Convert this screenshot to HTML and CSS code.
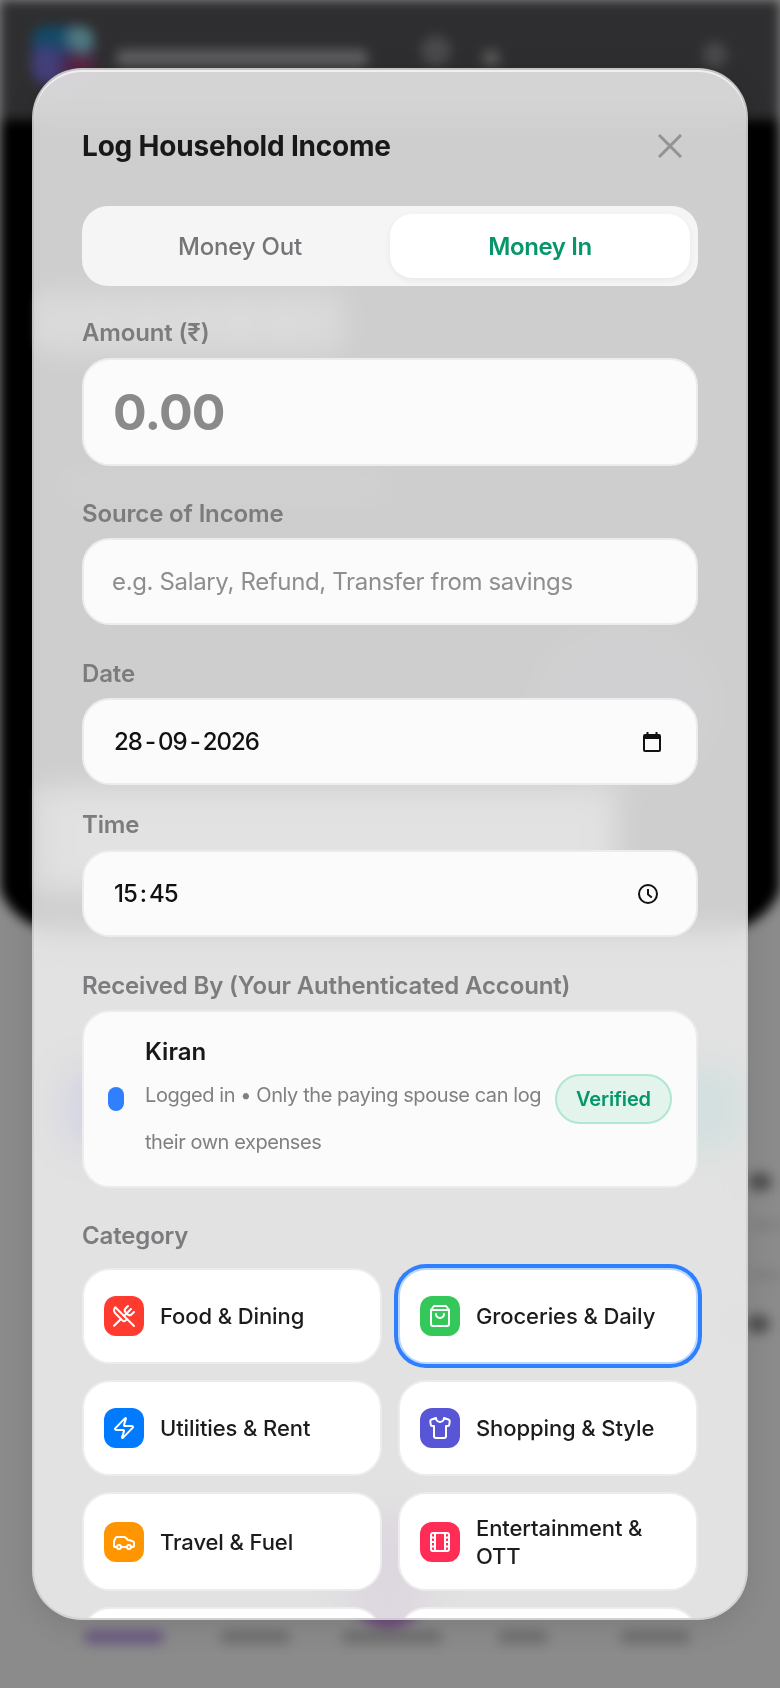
FILE: index.html
```html
<!DOCTYPE html>
<html lang="en">
<head>
    <meta charset="UTF-8">
    <meta name="viewport" content="width=device-width, initial-scale=1.0">
    <title>Log Household Income</title>
    <link rel="stylesheet" href="styles.css">
</head>
<body>

<!-- app page behind the sheet, only seen blurred -->
<div class="backdrop" aria-hidden="true">
    <div class="bd-hero"></div>
    <div class="bd-header"></div>
    <div class="bd-logo"></div>
    <div class="bd-brand"></div>
    <div class="bd-dot bd-dot-a"></div>
    <div class="bd-dot bd-dot-b"></div>
    <div class="bd-dot bd-dot-c"></div>
    <div class="bd-amount"></div>
    <div class="bd-line"></div>
    <div class="bd-circle"></div>
    <div class="bd-quick"></div>
    <div class="bd-blob bd-blob-purple"></div>
    <div class="bd-blob bd-blob-teal"></div>
    <div class="bd-blob bd-blob-lilac"></div>
    <div class="bd-spot bd-spot-a"></div>
    <div class="bd-spot bd-spot-b"></div>
    <div class="bd-row bd-row-a"></div>
    <div class="bd-row bd-row-b"></div>
    <div class="bd-nav bd-nav-a"></div>
    <div class="bd-nav bd-nav-b"></div>
    <div class="bd-nav bd-nav-c"></div>
    <div class="bd-nav bd-nav-d"></div>
    <div class="bd-nav bd-nav-e"></div>
</div>

<div class="overlay">
    <div class="sheet">
        <div class="sheet-header">
            <h1>Log Household Income</h1>
            <svg class="close-icon" viewBox="0 0 24 24" fill="none" stroke="currentColor" stroke-width="3"><path d="M1 1l22 22M23 1L1 23"/></svg>
        </div>

        <div class="segment">
            <div class="segment-tab">Money Out</div>
            <div class="segment-tab active">Money In</div>
        </div>

        <div class="group group-amount">
            <label>Amount (₹)</label>
            <input class="field field-amount" type="text" placeholder="0.00">
        </div>

        <div class="group group-source">
            <label>Source of Income</label>
            <input class="field" type="text" placeholder="e.g. Salary, Refund, Transfer from savings">
        </div>

        <div class="group group-date">
            <label>Date</label>
            <div class="field field-value">
                <span class="value-date">28<i>-</i>09<i>-</i>2026</span>
                <svg class="picker-icon" viewBox="0 0 20 20" fill="none"><path d="M5.5 0v3M14.5 0v3" stroke="#111" stroke-width="2"/><rect x="2" y="3" width="16" height="16" rx="1" stroke="#111" stroke-width="2"/><rect x="2" y="3" width="16" height="4" fill="#111"/></svg>
            </div>
        </div>

        <div class="group group-time">
            <label>Time</label>
            <div class="field field-value">
                <span class="value-date">15<i>:</i>45</span>
                <svg class="picker-icon picker-clock" viewBox="0 0 20 20" fill="none" stroke="#111" stroke-width="2"><circle cx="10" cy="10" r="9"/><path d="M10 5v5.4l3.8 3.2"/></svg>
            </div>
        </div>

        <div class="group group-received">
            <label>Received By (Your Authenticated Account)</label>
            <div class="account-card">
                <span class="account-dot"></span>
                <div class="account-info">
                    <div class="account-name">Kiran</div>
                    <div class="account-note">Logged in • Only the paying spouse can log their own expenses</div>
                </div>
                <span class="badge-verified">Verified</span>
            </div>
        </div>

        <div class="group group-category">
            <label>Category</label>
            <div class="category-grid">
                <div class="category-card">
                    <span class="cat-icon cat-red"><svg viewBox="0 0 24 24"><path d="m16 2-2.3 2.3a3 3 0 0 0 0 4.2l1.8 1.8a3 3 0 0 0 4.2 0L22 8"/><path d="M15 15 3.3 3.3a4.2 4.2 0 0 0 0 6l7.3 7.3c.7.7 2 .7 2.8 0L15 15Zm0 0 7 7"/><path d="m2.1 21.8 6.4-6.3"/><path d="m19 5-7 7"/></svg></span>
                    <span>Food &amp; Dining</span>
                </div>
                <div class="category-card selected">
                    <span class="cat-icon cat-green"><svg viewBox="0 0 24 24"><path d="M6 2 3 6v14a2 2 0 0 0 2 2h14a2 2 0 0 0 2-2V6l-3-4Z"/><path d="M3 6h18"/><path d="M16 10a4 4 0 0 1-8 0"/></svg></span>
                    <span>Groceries &amp; Daily</span>
                </div>
                <div class="category-card">
                    <span class="cat-icon cat-blue"><svg viewBox="0 0 24 24"><path d="M4 14a1 1 0 0 1-.78-1.63l9.9-10.2a.5.5 0 0 1 .86.46l-1.92 6.02A1 1 0 0 0 13 10h7a1 1 0 0 1 .78 1.63l-9.9 10.2a.5.5 0 0 1-.86-.46l1.92-6.02A1 1 0 0 0 11 14z"/></svg></span>
                    <span>Utilities &amp; Rent</span>
                </div>
                <div class="category-card">
                    <span class="cat-icon cat-indigo"><svg viewBox="0 0 24 24"><path d="M20.38 3.46 16 2a4 4 0 0 1-8 0L3.62 3.46a2 2 0 0 0-1.34 2.23l.58 3.47a1 1 0 0 0 .99.84H6v10c0 1.1.9 2 2 2h8a2 2 0 0 0 2-2V10h2.15a1 1 0 0 0 .99-.84l.58-3.47a2 2 0 0 0-1.34-2.23z"/></svg></span>
                    <span>Shopping &amp; Style</span>
                </div>
                <div class="category-card">
                    <span class="cat-icon cat-orange"><svg viewBox="0 0 24 24"><path d="M19 17h2c.6 0 1-.4 1-1v-3c0-.9-.7-1.7-1.5-1.9C18.7 10.6 16 10 16 10s-1.3-1.4-2.2-2.3c-.5-.4-1.1-.7-1.8-.7H5c-.6 0-1.1.4-1.4.9l-1.4 2.9A3.7 3.7 0 0 0 2 12v4c0 .6.4 1 1 1h2"/><circle cx="7" cy="17" r="2"/><path d="M9 17h6"/><circle cx="17" cy="17" r="2"/></svg></span>
                    <span>Travel &amp; Fuel</span>
                </div>
                <div class="category-card">
                    <span class="cat-icon cat-pink"><svg viewBox="0 0 24 24"><rect width="18" height="18" x="3" y="3" rx="2"/><path d="M7 3v18"/><path d="M3 7.5h4"/><path d="M3 12h4"/><path d="M3 16.5h4"/><path d="M17 3v18"/><path d="M17 7.5h4"/><path d="M17 12h4"/><path d="M17 16.5h4"/></svg></span>
                    <span>Entertainment &amp; OTT</span>
                </div>
                <div class="category-card"></div>
                <div class="category-card"></div>
            </div>
        </div>
    </div>
</div>

</body>
</html>
```

FILE: styles.css
```css
* { box-sizing: border-box; }
html, body { margin: 0; height: 100%; }
body { position: relative; width: 780px; height: 1688px; overflow: hidden; font-family: Inter, "Noto Sans", sans-serif; color: #1c1c1e; background-color: #8b8b8b; }

/* Blurred page behind the sheet */
.backdrop { position: absolute; inset: 0; overflow: hidden; filter: blur(6px); background-color: #8b8b8b; }
.backdrop div { position: absolute; }
.bd-hero { left: -4px; top: 0; width: 788px; height: 930px; background-color: #000; border-radius: 0 0 62px 62px; }
.bd-header { left: -20px; top: -20px; width: 820px; height: 140px; background-color: #2e2e30; }
.bd-logo { left: 32px; top: 26px; width: 62px; height: 58px; border-radius: 14px; background:
    radial-gradient(circle at 80% 20%, #4f7a80 0 14%, transparent 34%),
    radial-gradient(circle at 82% 72%, #56223f 0 20%, transparent 42%),
    radial-gradient(circle at 20% 78%, #443f7a 0 25%, transparent 50%),
    radial-gradient(circle at 25% 20%, #104a66 0 20%, transparent 45%),
    #17226e; }
.bd-brand { left: 116px; top: 50px; width: 252px; height: 16px; border-radius: 6px; background-color: #606062; }
.bd-dot { border-radius: 50%; background-color: #5c5c5c; }
.bd-dot-a { left: 421px; top: 36px; width: 30px; height: 30px; background-color: #4a4a4c; }
.bd-dot-b { left: 482px; top: 50px; width: 18px; height: 16px; }
.bd-dot-c { left: 703px; top: 42px; width: 24px; height: 26px; background-color: #4a4a4c; }
.bd-amount { left: 38px; top: 292px; width: 304px; height: 60px; border-radius: 10px; background: repeating-linear-gradient(90deg, #666 0 36px, #3c3c3c 36px 46px); }
.bd-line { left: 60px; top: 476px; width: 330px; height: 20px; border-radius: 8px; background-color: #242428; }
.bd-circle { left: 530px; top: 620px; width: 190px; height: 170px; border-radius: 50%; background-color: #14141e; }
.bd-quick { left: 40px; top: 787px; width: 576px; height: 104px; background-color: #8b8b8b; }
.bd-blob { border-radius: 24px; }
.bd-blob-purple { left: 62px; top: 1066px; width: 84px; height: 84px; background-color: #3a3a96; }
.bd-blob-teal { left: 654px; top: 1066px; width: 84px; height: 84px; background-color: #2a7a78; }
.bd-blob-lilac { left: 340px; top: 1510px; width: 96px; height: 118px; border-radius: 50%; background-color: #6e4a7e; }
.bd-spot { width: 24px; height: 20px; border-radius: 50%; background-color: #505050; }
.bd-spot-a { left: 748px; top: 1172px; }
.bd-spot-b { left: 746px; top: 1314px; }
.bd-row { left: 750px; width: 40px; height: 10px; background-color: #808080; }
.bd-row-a { top: 1220px; }
.bd-row-b { top: 1270px; }
.bd-nav { top: 1630px; height: 14px; border-radius: 6px; background-color: #707070; }
.bd-nav-a { left: 84px; width: 80px; background-color: #6b5a82; }
.bd-nav-b { left: 220px; width: 70px; }
.bd-nav-c { left: 342px; width: 100px; }
.bd-nav-d { left: 498px; width: 50px; }
.bd-nav-e { left: 620px; width: 70px; }

/* Sheet */
.overlay { position: absolute; inset: 0; padding: 68px 32px; }
.sheet { height: 1552px; padding: 56px 48px 0; overflow: hidden; background-color: rgba(240, 240, 240, 0.86); border: 2px solid rgba(0, 0, 0, 0.07); border-radius: 50px; box-shadow: 0 8px 30px rgba(0,0,0,0.1), inset 0 2px 0 rgba(255,255,255,0.65); backdrop-filter: blur(14px); }
.sheet-header { display: flex; align-items: center; justify-content: space-between; height: 40px; margin-bottom: 40px; }
h1 { margin: 0; font-size: 28px; font-weight: 700; letter-spacing: -0.2px; color: #18181a; }
.close-icon { width: 24px; height: 24px; margin-right: 16px; color: #939393; }

.segment { display: grid; grid-template-columns: 1fr 1fr; height: 80px; padding: 8px; background-color: #f5f5f5; border-radius: 26px; }
.segment-tab { display: flex; align-items: center; justify-content: center; font-size: 24px; font-weight: 500; letter-spacing: -0.2px; color: #757578; border-radius: 22px; }
.segment-tab.active { font-weight: 600; letter-spacing: -0.4px; background-color: #fff; color: #059669; box-shadow: 0 2px 6px rgba(0,0,0,0.06); }

/* Form groups */
.group label { display: block; height: 30px; line-height: 30px; margin-bottom: 9px; font-size: 24px; font-weight: 600; letter-spacing: -0.15px; color: #7c7c7f; }
.group-amount { margin-top: 32px; }
.group-amount label { margin-bottom: 10px; }
.group-source { margin-top: 33px; }
.group-date { margin-top: 34px; }
.group-time { margin-top: 25px; }
.group-time label { margin-bottom: 10px; }
.group-received { margin-top: 34px; }
.group-category { margin-top: 33px; }
.group-category label { margin-bottom: 17px; }

.field { display: block; width: 100%; height: 87px; padding: 0 28px; background-color: #fbfbfb; border: 2px solid #ececec; border-radius: 28px; font-family: inherit; font-size: 24px; letter-spacing: -0.35px; color: #111; outline: none; }
.field::placeholder { color: #8e8e90; opacity: 1; }
.field-amount { height: 108px; padding: 0 29px; font-size: 50px; font-weight: 700; letter-spacing: -0.8px; }
.field-amount::placeholder { color: #8a8a8a; }
.field-value { display: flex; align-items: center; justify-content: space-between; padding: 0 34px 0 30px; }
.value-date { font-size: 24px; font-weight: 500; letter-spacing: -1px; color: #111; }
.value-date i { font-style: normal; margin: 0 3px; }
.picker-icon { width: 20px; height: 20px; }
.picker-clock { margin-right: 4px; }

/* Account */
.account-card { display: flex; align-items: center; height: 178px; padding: 0 24px; background-color: #fbfbfb; border: 2px solid #ececec; border-radius: 28px; }
.account-dot { flex: none; width: 16px; height: 24px; margin-right: 21px; background-color: #2f7fff; border-radius: 8px; }
.account-info { flex: 1; padding-top: 4px; }
.account-name { margin-bottom: 4px; font-size: 24px; font-weight: 600; line-height: 32px; color: #18181a; }
.account-note { font-size: 20px; line-height: 47px; letter-spacing: -0.43px; color: #808083; }
.badge-verified { flex: none; width: 117px; height: 50px; line-height: 46px; text-align: center; font-size: 20px; font-weight: 600; letter-spacing: -0.15px; color: #059669; background-color: #e2f4ec; border: 2px solid #b0e6d2; border-radius: 25px; }

/* Categories */
.category-grid { display: grid; grid-template-columns: 1fr 1fr; gap: 16px; }
.category-card { display: flex; align-items: center; gap: 16px; min-height: 96px; padding: 19.5px 20px; font-size: 22px; font-weight: 500; line-height: 28px; letter-spacing: -0.1px; color: #1c1c1e; background-color: #fff; border: 2px solid #ececec; border-radius: 28px; }
.category-card.selected { border-color: #bcd8ff; box-shadow: 0 0 0 4px #2f7fff; }
.cat-icon { flex: none; display: flex; align-items: center; justify-content: center; width: 40px; height: 40px; border-radius: 12px; }
.cat-icon svg { width: 24px; height: 24px; fill: none; stroke: #fff; stroke-width: 2; stroke-linecap: round; stroke-linejoin: round; }
.cat-red { background-color: #ff3b30; }
.cat-green { background-color: #34c759; }
.cat-blue { background-color: #007aff; }
.cat-indigo { background-color: #5856d6; }
.cat-orange { background-color: #ff9500; }
.cat-pink { background-color: #ff2d55; }
```
